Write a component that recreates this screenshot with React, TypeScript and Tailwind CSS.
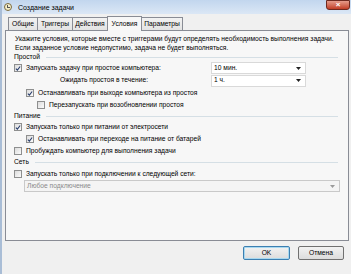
import React from "react";

const F = { fontFamily: '"Liberation Sans", Arial, sans-serif' };

function Check({ checked }: { checked?: boolean }) {
  return (
    <div className="w-[8px] h-[8px] border border-[#8e8f8f] bg-gradient-to-br from-[#dcdcdc] to-[#fbfbfb] flex items-center justify-center shrink-0">
      {checked && (
        <svg width="7" height="7" viewBox="0 0 7 7">
          <path d="M1 3.6 L2.8 5.4 L6 1.2" stroke="#2a3f6e" strokeWidth="1.3" fill="none" />
        </svg>
      )}
    </div>
  );
}

function Select({ value, width, disabled }: { value: string; width: string; disabled?: boolean }) {
  return (
    <div
      className={`${width} h-[12px] border flex items-center justify-between pl-[2px] pr-[4px] ${
        disabled ? "border-[#c9c9c9] bg-[#f4f4f4] text-[#8a8a8a]" : "border-[#d9d9d9] bg-white text-black"
      }`}
    >
      <span>{value}</span>
      <svg width="5" height="3" viewBox="0 0 5 3">
        <path d="M0 0 H5 L2.5 3 Z" fill={disabled ? "#9a9a9a" : "#222"} />
      </svg>
    </div>
  );
}

function Group({ title, h }: { title: string; h: string }) {
  return (
    <div className={`${h} flex items-center pl-[8px] pr-[10px] gap-[6px]`}>
      <span>{title}</span>
      <div className="flex-1 h-px bg-[#d5dfe5]" />
    </div>
  );
}

function Row({ indent, checked, text }: { indent: string; checked?: boolean; text: string }) {
  return (
    <div className={`h-[12px] flex items-center ${indent}`}>
      <Check checked={checked} />
      <span className="ml-[4px]">{text}</span>
    </div>
  );
}

function Tab({ label, w }: { label: string; w: string }) {
  return (
    <div className={`${w} h-[13px] border border-[#898c95] border-b-0 -mr-px bg-gradient-to-b from-[#f2f2f2] to-[#e3e3e3] flex items-center justify-center`}>
      {label}
    </div>
  );
}

export default function App() {
  return (
    <div style={F} className="w-[351px] h-[274px] bg-[#f0f0f0] text-[6.7px] leading-none text-black border-l-2 border-[#a9bdd6] overflow-hidden flex flex-col relative whitespace-nowrap">
      {/* title bar */}
      <div className="h-[14px] bg-gradient-to-b from-[#c2d6ee] to-[#dbe7f5] flex items-center pl-[2px] shrink-0">
        <div className="w-[8px] h-[8px] rounded-full border border-[#7a6a40] bg-[#f5eec8] flex items-center justify-center">
          <div className="w-[3px] h-[3px] border-l border-b border-[#555] -mt-[1px]" />
        </div>
        <span className="ml-[6px] text-[7px] text-black">Создание задачи</span>
      </div>
      <div className="absolute right-[1px] top-0 w-[24px] h-[10px] rounded-b-[3px] bg-gradient-to-b from-[#e59b8b] to-[#c13c24] border border-[#6e2a20] flex items-center justify-center">
        <span className="text-white text-[8px] font-bold leading-none">×</span>
      </div>

      {/* tabs */}
      <div className="h-[16px] flex items-end pl-[6px] shrink-0 relative z-10">
        <Tab label="Общие" w="w-[30px]" />
        <Tab label="Триггеры" w="w-[36px]" />
        <Tab label="Действия" w="w-[36px]" />
        <div className="w-[35px] h-[15px] border border-[#898c95] border-b-0 bg-[#f7f7f7] flex items-center justify-center -mb-px -mr-px">
          Условия
        </div>
        <Tab label="Параметры" w="w-[42px]" />
      </div>

      {/* panel */}
      <div className="mx-[3px] mr-[2px] h-[211px] border border-[#898c95] bg-[#f7f7f7] flex flex-col pt-[4px] shrink-0">
        <div className="h-[9px] flex items-center pl-[9px]">
          Укажите условия, которые вместе с триггерами будут определять необходимость выполнения задачи.
        </div>
        <div className="h-[9px] flex items-center pl-[9px]">
          Если заданное условие недопустимо, задача не будет выполняться.
        </div>
        <Group title="Простой" h="h-[9px]" />
        <div className="h-[12px] flex items-center pl-[8px]">
          <Check checked />
          <span className="ml-[4px]">Запускать задачу при простое компьютера:</span>
          <div className="ml-auto mr-[42px]">
            <Select value="10 мин." width="w-[95px]" />
          </div>
        </div>
        <div className="h-[13px] flex items-center pl-[54px]">
          <span>Ожидать простоя в течение:</span>
          <div className="ml-auto mr-[42px]">
            <Select value="1 ч." width="w-[95px]" />
          </div>
        </div>
        <Row indent="pl-[20px]" checked text="Останавливать при выходе компьютера из простоя" />
        <Row indent="pl-[31px]" text="Перезапускать при возобновлении простоя" />
        <Group title="Питание" h="h-[10px]" />
        <Row indent="pl-[8px]" checked text="Запускать только при питании от электросети" />
        <Row indent="pl-[20px]" checked text="Останавливать при переходе на питание от батарей" />
        <Row indent="pl-[8px]" text="Пробуждать компьютер для выполнения задачи" />
        <Group title="Сеть" h="h-[11px]" />
        <Row indent="pl-[8px]" text="Запускать только при подключении к следующей сети:" />
        <div className="pl-[18px] pr-[8px]">
          <Select value="Любое подключение" width="w-full" disabled />
        </div>
      </div>

      {/* buttons */}
      <div className="flex justify-end gap-[8px] pr-[7px] pt-[5px]">
        <div className="w-[47px] h-[14px] border border-[#3c7fb1] rounded-[2px] bg-gradient-to-b from-[#f2f2f2] to-[#dcdcdc] flex items-center justify-center shadow-[inset_0_0_0_1px_#a8d8f0]">
          OK
        </div>
        <div className="w-[46px] h-[14px] border border-[#707070] rounded-[2px] bg-gradient-to-b from-[#f2f2f2] to-[#dcdcdc] flex items-center justify-center">
          Отмена
        </div>
      </div>
    </div>
  );
}
